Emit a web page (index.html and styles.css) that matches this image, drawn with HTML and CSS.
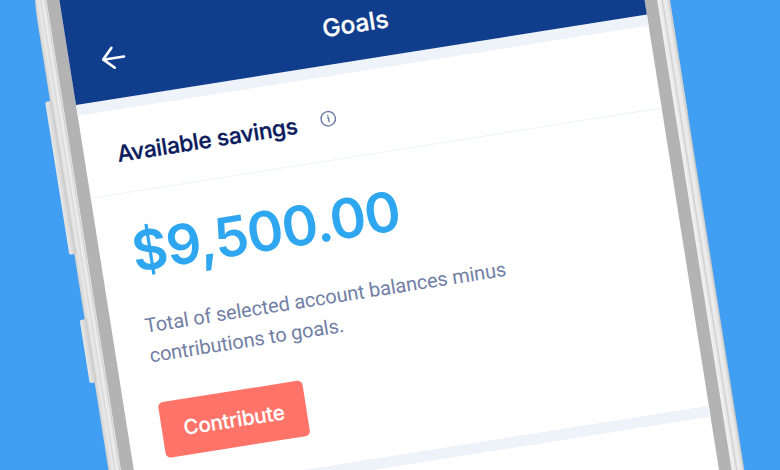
FILE: index.html
```html
<!DOCTYPE html>
<html lang="en">
<head>
<meta charset="utf-8">
<title>Goals</title>
<link rel="stylesheet" href="styles.css">
</head>
<body>
<main class="stage">
  <div class="phone">
    <span class="key key-volume-up"></span>
    <span class="key key-volume-down"></span>
    <span class="key-power"></span>
    <div class="screen">
      <header class="topbar">
        <svg class="back" width="28" height="28" viewBox="0 0 28 28"><path d="M25 14.600H4M13.800 4.200 4 14.300l10 9.900"/></svg>
        <h1 class="title">Goals</h1>
      </header>
      <section class="card">
        <div class="card-head">
          <h2 class="heading">Available savings</h2>
          <svg class="info" width="18" height="18" viewBox="0 0 18 18"><circle cx="9" cy="9" r="7.200"/><path d="M8 8h1.300v4.500"/><path class="dot" d="M9 5v1.300"/></svg>
        </div>
        <div class="card-body">
          <div class="amount">$9,500.00</div>
          <p class="note">Total of selected account balances minus<br>contributions to goals.</p>
          <button class="contribute">Contribute</button>
        </div>
      </section>
      <section class="next"></section>
    </div>
  </div>
</main>
</body>
</html>
```
FILE: styles.css
```css
* { box-sizing: border-box; margin: 0; }
body { font-family: Inter, "Liberation Sans", sans-serif; }
.stage {
  width: 780px;
  height: 470px;
  overflow: hidden;
  background: #409ff2;
  display: flow-root;
}
.phone {
  position: relative;
  width: 628px;
  height: 620px;
  margin: -25px 0 0 51px;
  padding: 0 25px;
  border-radius: 8px 0 0 0 / 40px 0 0 0;
  background: linear-gradient(90deg,
    #cfcfcf 0, #dedede 2px, #e9e9e9 5px, #d8d8d8 6.500px, #ededed 8px, #e6e6e6 10px, #d0d0d0 11px, #e4e4e4 12px, #b3b3b3 12.800px,
    #b3b3b3 615px, #f2f2f2 616px, #e9e9e9 619px, #d0d0d0 620.500px, #ececec 622px, #e8e8e8 625px, #c4c4c4 628px);
  transform: rotate(-9deg);
  transform-origin: 25px 130px;
}
.key {
  position: absolute;
  left: -5px;
  width: 7px;
  border-radius: 2px 0 0 2px;
  background: linear-gradient(90deg, #e8e8e8, #dcdcdc 50%, #c9c9c9);
}
.key-volume-up { top: 122px; height: 155px; }
.key-volume-down { top: 343px; height: 64px; }
.key-power {
  position: absolute;
  right: 0;
  top: 114px;
  width: 1.500px;
  height: 119px;
  background: #d2d2d2;
}
.screen { height: 100%; background: #fff; }
.topbar {
  position: relative;
  height: 130px;
  background: #103d8c;
  color: #fff;
  display: flex;
  justify-content: center;
  align-items: flex-end;
  padding-bottom: 22.500px;
}
.back {
  position: absolute;
  left: 30px;
  bottom: 27px;
  fill: none;
  stroke: #fff;
  stroke-width: 2.700;
  stroke-linecap: round;
  stroke-linejoin: round;
}
.title {
  margin-left: -1px;
  font-size: 24.500px;
  line-height: 30px;
  font-weight: 500;
  -webkit-text-stroke: 0.300px #fff;
}
.card { border-top: 11px solid #eef2f9; }
.card-head {
  height: 84px;
  padding: 0 33px;
  display: flex;
  align-items: center;
  gap: 23px;
  border-bottom: 1.500px solid #edf2f8;
}
.heading {
  width: 182px;
  color: #0b1a5c;
  font-size: 22.500px;
  font-weight: 500;
  line-height: 30px;
  letter-spacing: -0.200px;
  white-space: nowrap;
  padding-top: 4px;
  -webkit-text-stroke: 0.350px #0b1a5c;
}
.info { fill: none; stroke: #6b7aa5; stroke-width: 1.400; }
.card-body { height: 301px; padding: 29px 33.500px 0; }
.amount {
  margin-left: -1px;
  color: #2ea7f0;
  font-size: 55px;
  font-weight: 600;
  line-height: 60px;
  letter-spacing: -1.150px;
}
.note {
  margin-top: 31px;
  color: #7280a6;
  font-family: Roboto, sans-serif;
  font-size: 20px;
  line-height: 29.800px;
  letter-spacing: -0.120px;
}
.contribute {
  display: block;
  width: 146.500px;
  height: 56px;
  margin-top: 32px;
  padding: 2px 0 0;
  border: 0;
  border-radius: 5px;
  background: #ff7369;
  color: #fff;
  font: 500 20.500px/54px Inter, sans-serif;
  letter-spacing: -0.200px;
  -webkit-text-stroke: 0.200px #fff;
}
.next { border-top: 11px solid #eef2f9; }
```
